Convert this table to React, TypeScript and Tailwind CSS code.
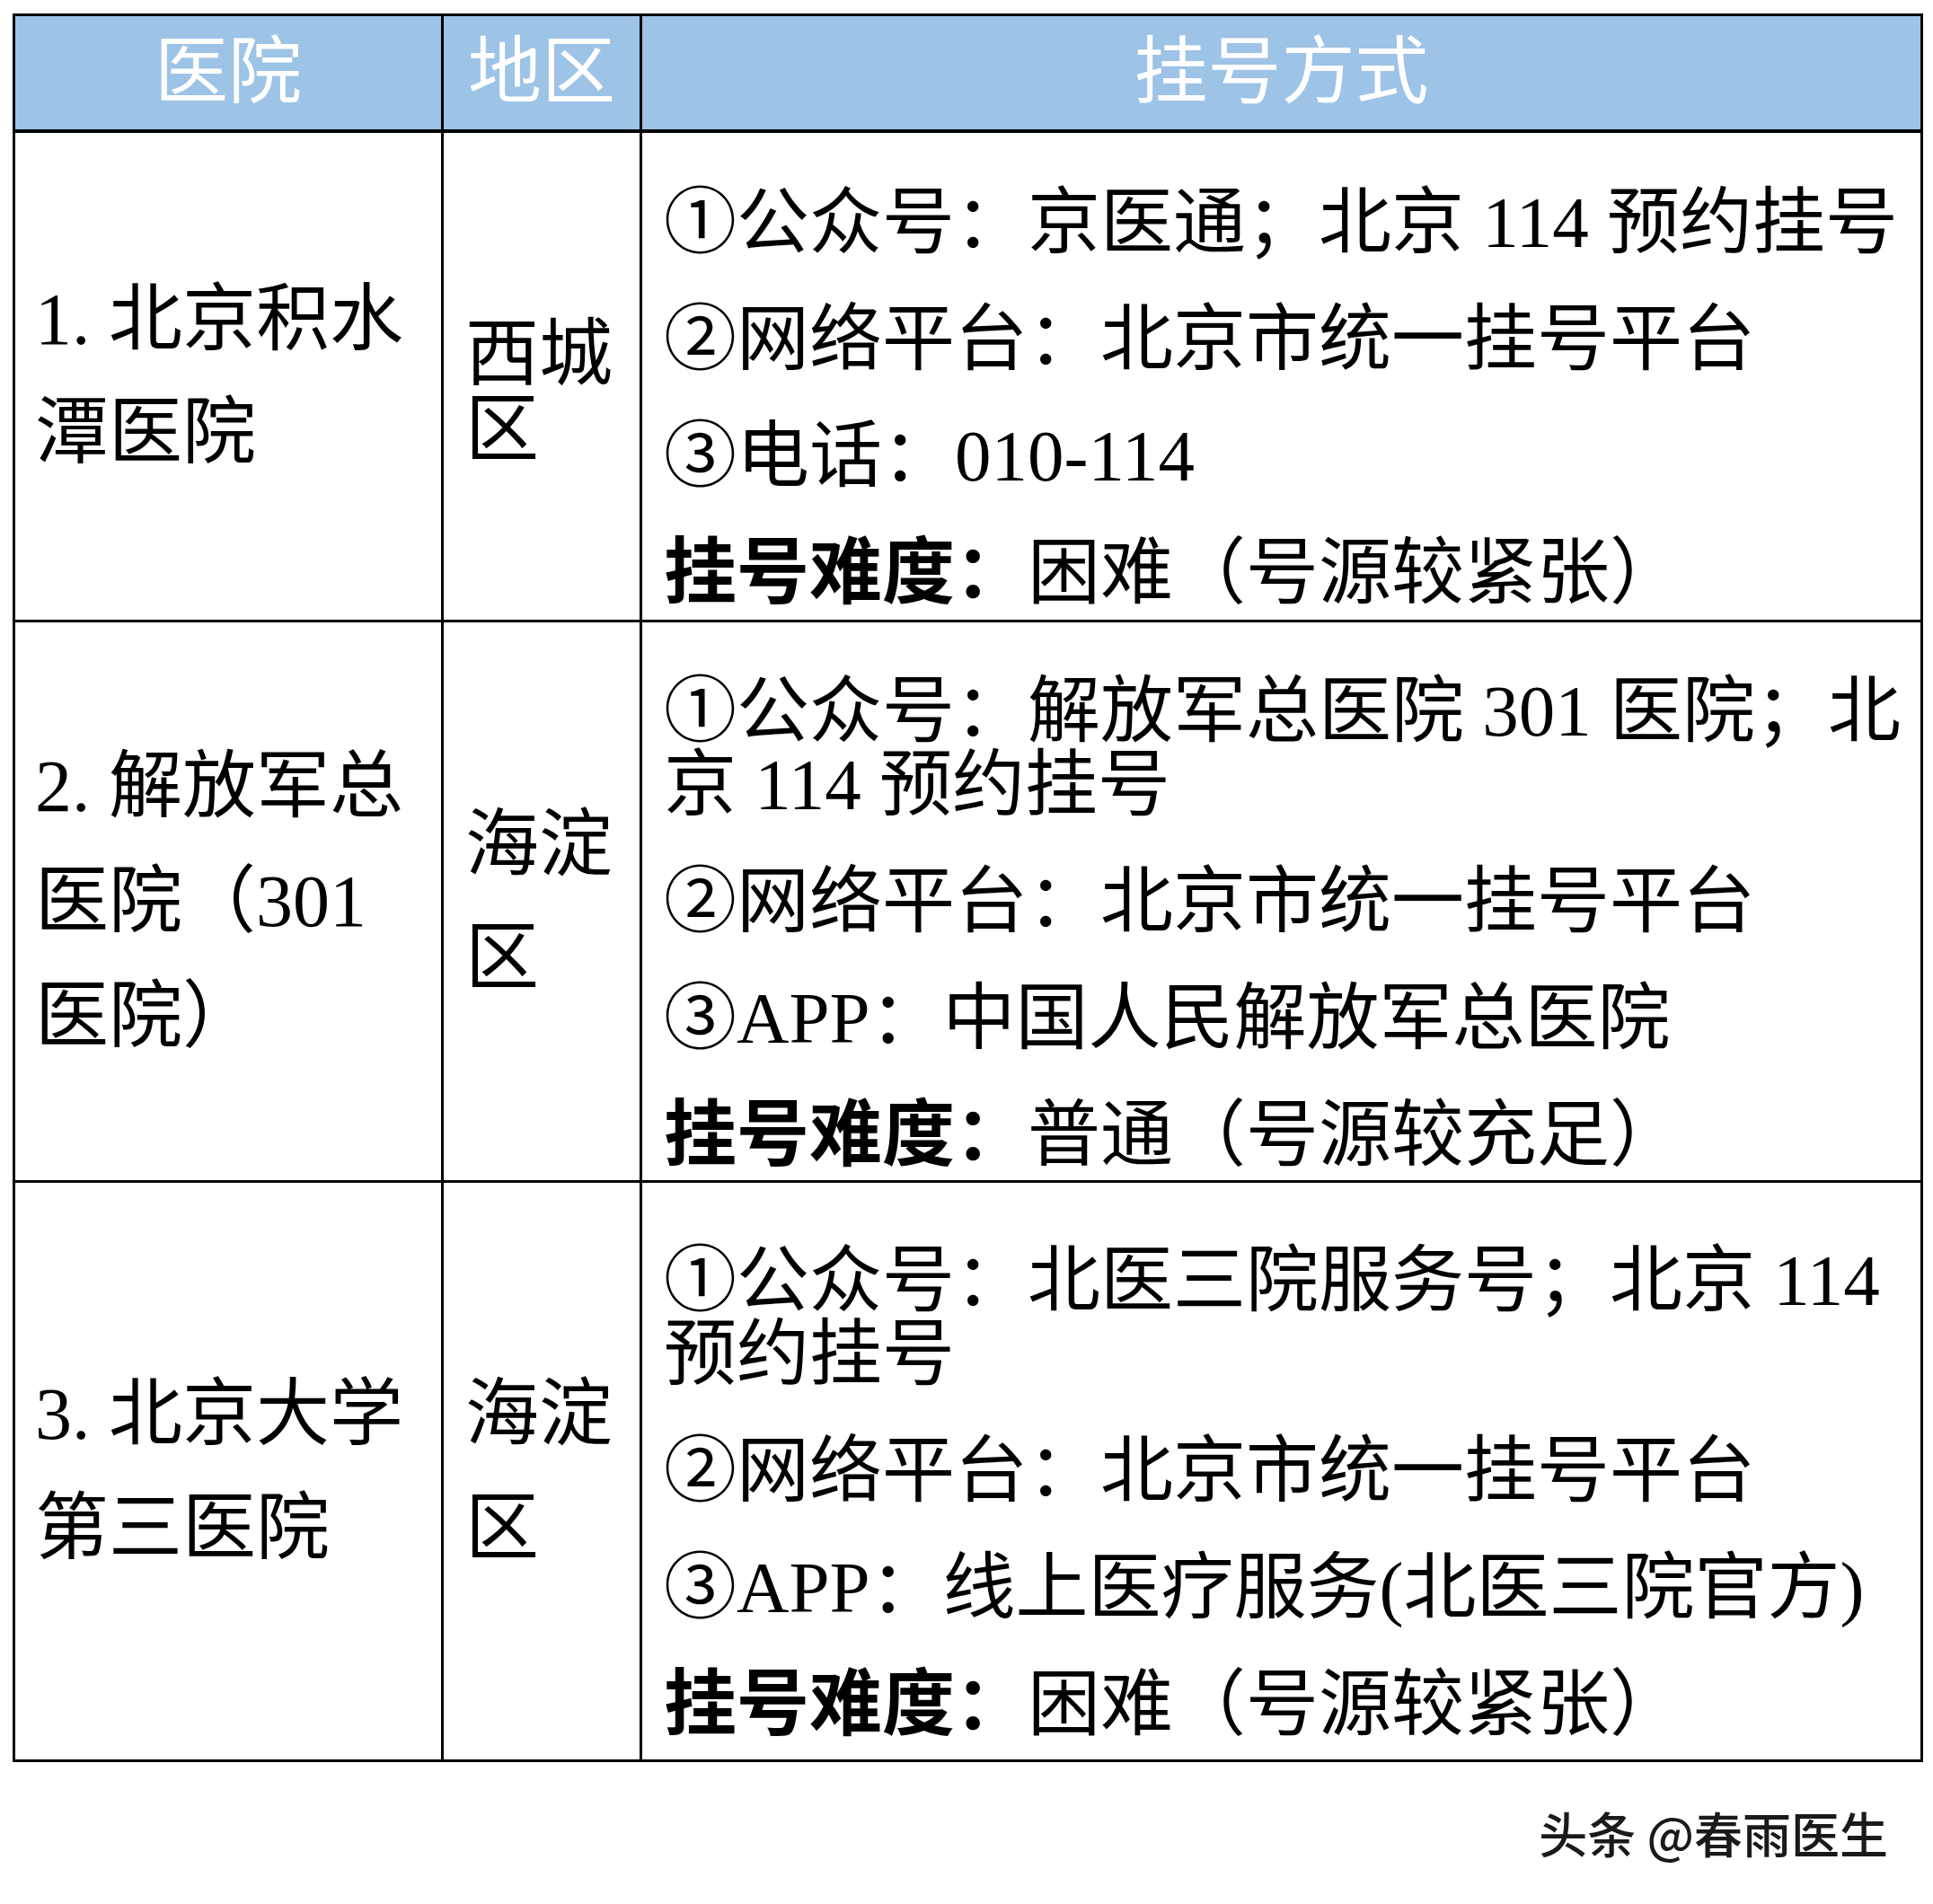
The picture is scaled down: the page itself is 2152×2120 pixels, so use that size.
import React from 'react';

const FONT = { fontFamily: '"Liberation Serif", "Noto Sans CJK SC", serif' };

type Row = {
  height: string;
  hospital: string[];
  hospitalLeading: string;
  area: string[];
  areaLeading: string;
  methods: string[][];
  difficulty: string;
};

const rows: Row[] = [
  {
    height: 'h-[545px]',
    hospital: ['1. 北京积水', '潭医院'],
    hospitalLeading: 'leading-[126px]',
    area: ['西城', '区'],
    areaLeading: 'leading-[84px] pt-[36px]',
    methods: [
      ['①公众号：京医通；北京 114 预约挂号'],
      ['②网络平台：北京市统一挂号平台'],
      ['③电话：010-114'],
    ],
    difficulty: '困难（号源较紧张）',
  },
  {
    height: 'h-[624px]',
    hospital: ['2. 解放军总', '医院（301', '医院）'],
    hospitalLeading: 'leading-[128px]',
    area: ['海淀', '区'],
    areaLeading: 'leading-[126px]',
    methods: [
      ['①公众号：解放军总医院 301 医院；北', '京 114 预约挂号'],
      ['②网络平台：北京市统一挂号平台'],
      ['③APP：中国人民解放军总医院'],
    ],
    difficulty: '普通（号源较充足）',
  },
  {
    height: 'h-[645px]',
    hospital: ['3. 北京大学', '第三医院'],
    hospitalLeading: 'leading-[127px]',
    area: ['海淀', '区'],
    areaLeading: 'leading-[127px]',
    methods: [
      ['①公众号：北医三院服务号；北京 114', '预约挂号'],
      ['②网络平台：北京市统一挂号平台'],
      ['③APP：线上医疗服务(北医三院官方)'],
    ],
    difficulty: '困难（号源较紧张）',
  },
];

const App: React.FC = () => {
  return (
    <div className="w-[2152px] h-[2120px] bg-white text-black" style={FONT}>
      <div className="pt-[15px] pl-[14px]">
        <div className="w-[2127px] grid grid-cols-[477px_221px_1fr] border-t-[3px] border-l-[3px] border-black">
          {/* header */}
          <div className="h-[130px] bg-[#9dc3e6] border-r-[3px] border-b-[4px] border-black flex items-center justify-center text-white text-[82px] leading-none">
            医院
          </div>
          <div className="h-[130px] bg-[#9dc3e6] border-r-[3px] border-b-[4px] border-black flex items-center justify-center text-white text-[82px] leading-none">
            地区
          </div>
          <div className="h-[130px] bg-[#9dc3e6] border-r-[3px] border-b-[4px] border-black flex items-center justify-center text-white text-[82px] leading-none">
            挂号方式
          </div>

          {rows.map((row, i) => (
            <React.Fragment key={i}>
              <div className={`${row.height} border-r-[3px] border-b-[3px] border-black flex items-center pl-[22px] text-[82px] ${row.hospitalLeading}`}>
                <div>
                  {row.hospital.map((line) => (
                    <div key={line} className="whitespace-nowrap">{line}</div>
                  ))}
                </div>
              </div>
              <div className={`${row.height} border-r-[3px] border-b-[3px] border-black flex items-center pl-[24px] text-[82px]`}>
                <div className={row.areaLeading}>
                  {row.area.map((line) => (
                    <div key={line} className="whitespace-nowrap">{line}</div>
                  ))}
                </div>
              </div>
              <div className={`${row.height} border-r-[3px] border-b-[3px] border-black flex flex-col justify-center pl-[24px] text-[81px] leading-[82px]`}>
                {row.methods.map((para, j) => (
                  <div key={j} className="pt-[48px]">
                    {para.map((line) => (
                      <div key={line} className="whitespace-nowrap">{line}</div>
                    ))}
                  </div>
                ))}
                <div className="pt-[48px] whitespace-nowrap">
                  <span className="font-bold">挂号难度：</span>
                  {row.difficulty}
                </div>
              </div>
            </React.Fragment>
          ))}
        </div>
      </div>

      <div className="flex justify-end pr-[50px] pt-[52px]">
        <span
          className="text-[54px] leading-none font-medium text-[#1a1a1a]"
          style={{ fontFamily: '"Noto Sans CJK SC", "Noto Sans", sans-serif' }}
        >
          头条 @春雨医生
        </span>
      </div>
    </div>
  );
};

export default App;
